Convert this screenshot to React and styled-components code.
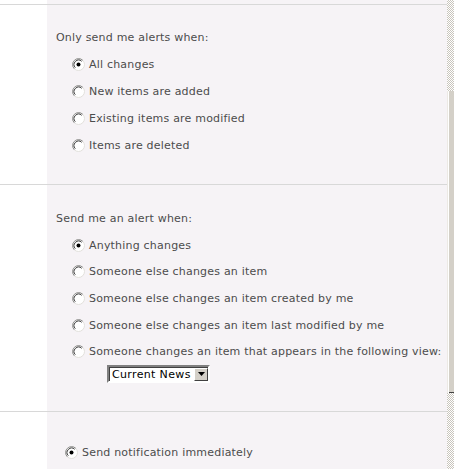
// Dependencies
import React from 'react';
import styled, { createGlobalStyle } from 'styled-components';

// Styles
const GlobalStyle = createGlobalStyle`
  html, body {
    margin: 0;
    padding: 0;
    background: #fff;
  }
  body {
    font-family: 'DejaVu Sans', Verdana, sans-serif;
    font-size: 11px;
    letter-spacing: 0.2px;
    color: #4c4c4c;
  }
`;

const Page = styled.div`
  display: flex;
  width: 454px;
  height: 469px;
  overflow: hidden;
`;

const Content = styled.div`
  flex: 1;
  display: flex;
  flex-direction: column;
`;

const Section = styled.div`
  display: flex;
  flex: ${(props) => (props.grow ? 1 : 'none')};
  height: ${(props) => props.height || 'auto'};
  border-bottom: ${(props) => (props.last ? 'none' : '1px solid #d8d8d8')};
`;

const Gutter = styled.div`
  width: 47px;
  flex: none;
  background: #fff;
`;

const Panel = styled.div`
  flex: 1;
  background: #f6f3f6;
  padding: ${(props) => props.padding || '0'};
  display: flex;
  flex-direction: column;
`;

const Label = styled.div`
  height: 27px;
  line-height: 27px;
  white-space: nowrap;
`;

const Option = styled.div`
  display: flex;
  align-items: center;
  height: ${(props) => props.height || '27px'};
  padding-left: ${(props) => props.indent};
  gap: 4px;
  white-space: nowrap;
`;

const FakeSelect = styled.div`
  display: flex;
  align-items: stretch;
  width: 99px;
  height: 14px;
  margin-left: 51px;
  border: 2px solid;
  border-color: #808080 #fff #fff #808080;
  box-shadow: inset 1px 1px 0 #404040;
  background: #fff;
  font-family: 'DejaVu Sans', Tahoma, sans-serif;
  font-size: 11px;
  letter-spacing: 0.35px;
  color: #000;
  white-space: nowrap;
  overflow: hidden;
`;

const SelectText = styled.span`
  flex: 1;
  padding-left: 3px;
  line-height: 15px;
  overflow: hidden;
`;

const SelectButton = styled.span`
  width: 14px;
  flex: none;
  display: flex;
  align-items: center;
  justify-content: center;
  background: #d4d0c8;
  border: 1px solid;
  border-color: #fff #404040 #404040 #fff;
  box-sizing: border-box;
  margin: 1px 0 0 0;
`;

const Scrollbar = styled.div`
  width: 7px;
  flex: none;
  display: flex;
  flex-direction: column;
  background-color: #fff;
  background-image: repeating-conic-gradient(#c8c4bc 0 25%, #fff 0 50%);
  background-size: 2px 2px;
`;

const Track = styled.div`
  height: ${(props) => props.height};
  flex: none;
`;

const Thumb = styled.div`
  height: 302px;
  flex: none;
  background: #d4d0c8;
  border-left: 1px solid #ece9e4;
  box-shadow: inset 1px 0 0 #fff, inset 0 -1px 0 #404040;
`;

// Icons
const Radio = ({ checked }) => (
  <svg width="13" height="13" viewBox="0 0 13 13">
    <circle cx="6.5" cy="6.5" r="6" fill="#fff" stroke="#e2e0dc" strokeWidth="1" />
    <path d="M2.26 10.74 A6 6 0 0 1 10.74 2.26" fill="none" stroke="#8c8c8c" strokeWidth="1" />
    <path d="M3.32 9.68 A4.5 4.5 0 0 1 9.68 3.32" fill="none" stroke="#3a3a3a" strokeWidth="1" />
    {checked && <circle cx="6.5" cy="6.5" r="2" fill="#000" />}
  </svg>
);

const Arrow = () => (
  <svg width="7" height="4" viewBox="0 0 7 4">
    <path d="M0 0 H7 L3.5 4 Z" fill="#000" />
  </svg>
);

const firstOptions = [
  ['All changes', true],
  ['New items are added', false],
  ['Existing items are modified', false],
  ['Items are deleted', false],
];

const secondOptions = [
  ['Anything changes', true],
  ['Someone else changes an item', false],
  ['Someone else changes an item created by me', false],
  ['Someone else changes an item last modified by me', false],
  ['Someone changes an item that appears in the following view:', false],
];

const App = () => {
  return (
    <>
      <GlobalStyle />
      <Page>
        <Content>
          <Section height="4px">
            <Gutter />
            <Panel />
          </Section>
          <Section>
            <Gutter />
            <Panel padding="19px 0 25px 9px">
              <Label>Only send me alerts when:</Label>
              {firstOptions.map(([text, checked]) => (
                <Option key={text} indent="16px">
                  <Radio checked={checked} />
                  {text}
                </Option>
              ))}
            </Panel>
          </Section>
          <Section>
            <Gutter />
            <Panel padding="20px 0 28px 9px">
              <Label>Send me an alert when:</Label>
              {secondOptions.map(([text, checked]) => (
                <Option key={text} indent="16px" height="26.6px">
                  <Radio checked={checked} />
                  {text}
                </Option>
              ))}
              <FakeSelect>
                <SelectText>Current News</SelectText>
                <SelectButton>
                  <Arrow />
                </SelectButton>
              </FakeSelect>
            </Panel>
          </Section>
          <Section grow last>
            <Gutter />
            <Panel padding="27px 0 0 9px">
              <Option indent="9px">
                <Radio checked />
                Send notification immediately
              </Option>
            </Panel>
          </Section>
        </Content>
        <Scrollbar>
          <Track height="91px" />
          <Thumb />
        </Scrollbar>
      </Page>
    </>
  );
};

export default App;
